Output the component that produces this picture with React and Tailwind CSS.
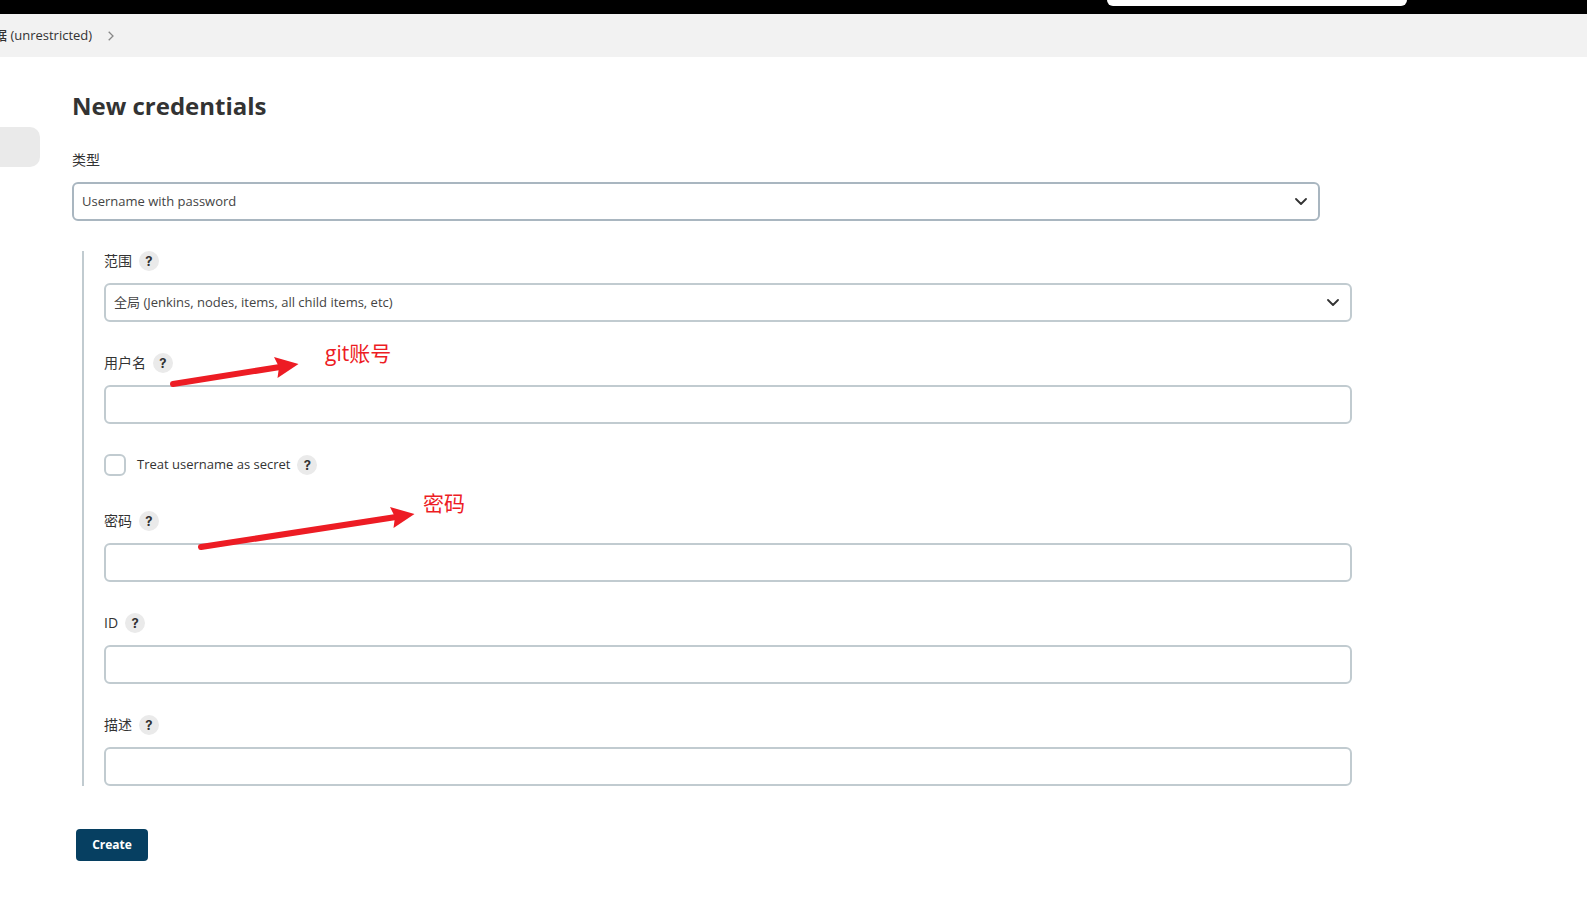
import { useId } from 'react'

/** Small round "?" button shown next to a field label. */
function HelpButton({ label }) {
  return (
    <button
      type="button"
      aria-label={`Help for ${label}`}
      className="flex size-5 shrink-0 items-center justify-center rounded-full bg-[#eaeaea] font-['Inter'] text-[13px] leading-5 font-bold text-[#333]"
    >
      ?
    </button>
  )
}

/** Native select with a custom chevron on the right. */
function Select({ id, options, className }) {
  return (
    <div className="relative">
      <select
        id={id}
        className={`block h-[39px] w-full appearance-none rounded-md border-2 bg-white pt-px pr-10 pl-2 text-[13px] text-[#444] ${className}`}
      >
        {options.map((option) => (
          <option key={option}>{option}</option>
        ))}
      </select>
      <svg
        viewBox="0 0 12 8"
        className="pointer-events-none absolute top-4 right-[13px] h-2 w-3"
        fill="none"
        stroke="#333"
        strokeWidth="1.8"
        strokeLinecap="round"
        strokeLinejoin="round"
      >
        <path d="M1 1l5 5 5-5" />
      </svg>
    </div>
  )
}

function Field({ label, type = 'text', options }) {
  const id = useId()

  return (
    <div>
      <div className="mb-3 flex h-5 items-center gap-[7px]">
        <label htmlFor={id} className="text-sm leading-5">{label}</label>
        <HelpButton label={label} />
      </div>
      {options ? (
        <Select id={id} options={options} className="border-[#c1cbd0]" />
      ) : (
        <input
          id={id}
          type={type}
          className="block h-[39px] w-full rounded-md border-2 border-[#c1cbd0] bg-white px-2 text-[13px]"
        />
      )}
    </div>
  )
}

// ── Red notes drawn over the form ─────────────────────────────────────────
function Annotations() {
  return (
    <div className="pointer-events-none absolute inset-0 text-[#ed1c24]">
      <svg className="absolute top-0 left-0 h-[600px] w-[500px]" viewBox="0 0 500 600">
        <g stroke="currentColor" strokeWidth="6" strokeLinecap="round">
          <path d="M173 384L280 367" />
          <path d="M201 547L396 517" />
        </g>
        <g fill="currentColor">
          <path d="M274 357L298.500 364L277.500 378L279 367Z" />
          <path d="M390 507L414.500 514L393.500 528L395 517Z" />
        </g>
      </svg>
      <span className="absolute top-[338px] left-[325px] text-[21px] leading-[30px]">git账号</span>
      <span className="absolute top-[488px] left-[423px] text-[21px] leading-[30px]">密码</span>
    </div>
  )
}

export default function App() {
  return (
    <div className="relative min-h-screen overflow-hidden bg-white font-['Open_Sans','Noto_Sans_CJK_SC',sans-serif] text-[#333]">
      <header className="flex h-3.5 justify-end bg-black pr-[180px]">
        <div className="h-1.5 w-[300px] rounded-b-md bg-white" />
      </header>

      <nav className="flex h-[43px] items-center bg-[#f2f2f2]">
        <a href="#" className="-ml-1.5 text-[13px] font-medium whitespace-nowrap">据 (unrestricted)</a>
        <svg viewBox="0 0 6 10" className="ml-4 h-2.5 w-1.5" fill="none" stroke="#888" strokeWidth="1.3">
          <path d="M0.700 0.700L5 5L0.700 9.300" />
        </svg>
      </nav>

      <div className="flex">
        <aside className="w-10 shrink-0 pt-[70px]">
          <div className="h-10 rounded-r-[10px] bg-[#eaeaea]" />
        </aside>

        <main className="max-w-[1312px] grow px-8 pt-8">
          <h1 className="text-2xl leading-[34px] font-bold">New credentials</h1>

          <form>
            <label htmlFor="kind" className="mt-[27px] mb-3 block text-sm leading-5">类型</label>
            <Select id="kind" options={['Username with password']} className="border-[#a9b6c0]" />

            <div className="mt-[30px] -mr-8 ml-2.5 flex flex-col gap-[31px] border-l-2 border-[#c1cbd0] pl-5">
              <Field label="范围" options={['全局 (Jenkins, nodes, items, all child items, etc)']} />
              <Field label="用户名" />
              <div className="mb-[5px] flex h-5 items-center gap-[7px]">
                <input
                  id="secret"
                  type="checkbox"
                  className="mr-1 size-[22px] shrink-0 appearance-none rounded-md border-2 border-[#c1cbd0] bg-white"
                />
                <label htmlFor="secret" className="text-[13px] font-medium">Treat username as secret</label>
                <HelpButton label="Treat username as secret" />
              </div>
              <Field label="密码" type="password" />
              <Field label="ID" />
              <Field label="描述" />
            </div>

            <button
              type="submit"
              className="mt-[43px] ml-1 h-8 w-18 rounded bg-[#063f61] text-xs font-bold text-white"
            >
              Create
            </button>
          </form>
        </main>
      </div>

      <Annotations />
    </div>
  )
}
